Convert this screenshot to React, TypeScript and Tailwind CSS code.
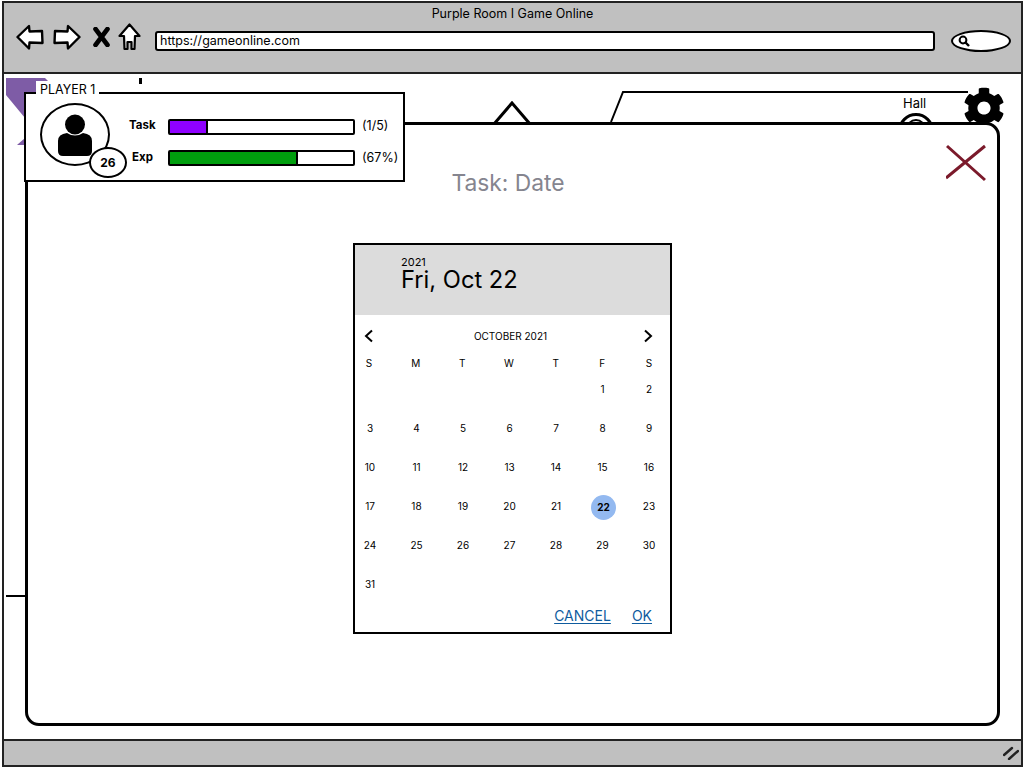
import { FaCog } from "react-icons/fa";

const WEEKDAYS = ["S", "M", "T", "W", "T", "F", "S"];
const LEADING_BLANKS = 5;
const DAYS = Array.from({ length: 31 }, (_, i) => i + 1);
const SELECTED_DAY = 22;

function BackArrow({ flip = false }: { flip?: boolean }) {
  return (
    <svg width="28" height="26" viewBox="0 0 28 26" className={flip ? "-scale-x-100" : ""}>
      <path
        d="M1.5 13 L13 2 L13.5 7.5 L26 7 L26.5 19 L13.5 18.5 L13 24.5 Z"
        fill="white"
        stroke="black"
        strokeWidth="2.4"
        strokeLinejoin="round"
      />
    </svg>
  );
}

function HomeIcon() {
  return (
    <svg width="23" height="28" viewBox="0 0 23 28">
      <path
        d="M11.5 1.5 L21.5 13 L17 13 L16.5 26 L13.5 26 L13.5 19 L9.5 19 L9.5 26 L6.5 26 L6 13 L1.5 13 Z"
        fill="white"
        stroke="black"
        strokeWidth="2.2"
        strokeLinejoin="round"
      />
    </svg>
  );
}

function StopIcon() {
  return (
    <svg width="17" height="20" viewBox="0 0 17 20">
      <path d="M2.5 2 L14.5 18 M14.5 2 L2.5 18" stroke="black" strokeWidth="4.6" strokeLinecap="round" />
    </svg>
  );
}

function PersonIcon() {
  return (
    <svg width="36" height="42" viewBox="0 0 36 42">
      <circle cx="18" cy="10.5" r="10" fill="black" />
      <path d="M1 27 Q1 20 10 19 Q18 24 26 19 Q35 20 35 27 L35 37 Q35 42 30 42 L6 42 Q1 42 1 37 Z" fill="black" />
    </svg>
  );
}

function Bar({ percent, color }: { percent: number; color: string }) {
  return (
    <div className="h-4 w-[187px] rounded-[2px] border-2 border-black bg-white">
      <div className="h-full border-r-2 border-black" style={{ width: `${percent}%`, backgroundColor: color }} />
    </div>
  );
}

function PlayerPanel() {
  return (
    <div className="absolute left-[20px] top-[18px] z-20 h-[90px] w-[381px] border-2 border-black bg-white">
      <span className="absolute -top-[13px] left-[10px] bg-white px-[4px] text-[12.5px] leading-[18px]">PLAYER 1</span>
      <div className="absolute left-[14px] top-[9px] flex h-[63px] w-[70px] items-center justify-center rounded-[50%] border-2 border-black">
        <PersonIcon />
      </div>
      <div className="absolute left-[63px] top-[53px] flex h-[31px] w-[38px] items-center justify-center rounded-[50%] border-2 border-black bg-white text-[12px] font-bold">
        26
      </div>
      <div className="ml-[103px] flex flex-col gap-[15px] pt-[25px]">
        <div className="flex h-4 items-center">
          <span className="w-[39px] pb-[2px] text-[11.5px] font-bold">Task</span>
          <Bar percent={21} color="#8f00ff" />
          <span className="ml-[7px] pb-[2px] text-[12.5px]">(1/5)</span>
        </div>
        <div className="flex h-4 items-center">
          <span className="w-[39px] pl-[3px] text-[11.5px] font-bold">Exp</span>
          <Bar percent={70} color="#009e0e" />
          <span className="ml-[7px] text-[12.5px]">(67%)</span>
        </div>
      </div>
    </div>
  );
}

function DatePicker() {
  return (
    <div className="ml-[325px] mt-[45px] flex h-[391px] w-[319px] flex-col border-2 border-black bg-white">
      <div className="h-[70px] bg-[#dcdcdc] pl-[46px] pt-[10px]">
        <div className="text-[11px] leading-[14px]">2021</div>
        <div className="text-[23.7px] leading-[22px]">Fri, Oct 22</div>
      </div>
      <div className="mt-[12px] flex h-[18px] items-center justify-between pl-[9px] pr-[17px]">
        <svg width="10" height="14" viewBox="0 0 10 14">
          <path d="M8 1.5 L2 7 L8 12.5" fill="none" stroke="black" strokeWidth="2" />
        </svg>
        <span className="ml-[4px] text-[10px]">OCTOBER 2021</span>
        <svg width="10" height="14" viewBox="0 0 10 14">
          <path d="M2 1.5 L8 7 L2 12.5" fill="none" stroke="black" strokeWidth="2" />
        </svg>
      </div>
      <div className="mt-[9px] grid grid-cols-[repeat(7,20px)] justify-between pl-[4px] pr-[11px] text-center text-[10px] leading-[18px]">
        {WEEKDAYS.map((d, i) => (
          <span key={i}>{d}</span>
        ))}
      </div>
      <div className="mt-[7px] grid auto-rows-[39px] grid-cols-[repeat(7,20px)] justify-between pl-[5px] pr-[11px] text-center text-[10px] leading-[20px]">
        {Array.from({ length: LEADING_BLANKS }, (_, i) => (
          <span key={`blank-${i}`} />
        ))}
        {DAYS.map((day) =>
          day === SELECTED_DAY ? (
            <span key={day} className="relative left-[1px] top-[1px] z-0 font-bold">
              <span className="absolute left-[-2.5px] top-[-2.5px] -z-10 size-[25px] rounded-full bg-[#93b9f0]" />
              {day}
            </span>
          ) : (
            <span key={day}>{day}</span>
          ),
        )}
      </div>
      <div className="mt-[-6px] flex justify-end gap-[21px] pr-[18px] text-[14px] leading-[18px] text-[#0f5c9e] underline underline-offset-2">
        <span>CANCEL</span>
        <span>OK</span>
      </div>
    </div>
  );
}

export default function App() {
  return (
    <div className="h-[768px] w-[1024px] overflow-hidden bg-white pb-[1px] pl-[2px] pr-[1px] pt-[1px] font-['Inter',sans-serif] text-black">
      <div className="flex h-full flex-col border-2 border-[#222]">
        {/* browser chrome */}
        <header className="h-[71px] shrink-0 border-b-2 border-[#222] bg-[#c0c0c0]">
          <div className="pt-[2px] text-center text-[12.5px] leading-[18px]">Purple Room I Game Online</div>
          <div className="flex h-[36px] items-center pl-[12px] pr-[10px]">
            <div className="mb-[8px] flex items-center">
              <BackArrow />
              <span className="w-[9px]" />
              <BackArrow flip />
              <span className="w-[12px]" />
              <StopIcon />
              <span className="w-[8px]" />
              <HomeIcon />
            </div>
            <div className="ml-[14px] flex h-[20px] w-[781px] items-center rounded-[3px] border-2 border-black bg-white pl-[3px] text-[12.5px]">
              https://gameonline.com
            </div>
            <div className="ml-[16px] flex h-[22px] w-[60px] items-center rounded-[50%] border-2 border-black bg-white pl-[5px]">
              <svg width="12" height="12" viewBox="0 0 12 12">
                <circle cx="5" cy="5" r="3.4" fill="none" stroke="black" strokeWidth="2" />
                <path d="M7.5 7.5 L11 11" stroke="black" strokeWidth="2.4" />
              </svg>
            </div>
          </div>
        </header>

        {/* page */}
        <main className="relative flex-1 bg-white">
          {/* room behind the dialog */}
          <svg width="60" height="70" viewBox="0 0 60 70" className="absolute left-[2px] top-[4px]">
            <path d="M0 0 L39 0 L44 5 L19 40 L0 17 Z" fill="#7e5ca6" />
            <path d="M11 67 L19 60 L19 67 Z" fill="#7e5ca6" />
          </svg>
          <div className="absolute left-[135px] top-[4px] h-[6px] w-[3px] bg-black" />
          <div className="absolute left-[2px] top-[521px] h-[2px] w-[20px] bg-black" />
          <svg width="360" height="34" viewBox="0 0 360 34" className="absolute left-[606px] top-[16px]">
            <path d="M1 32 L13 2 L358 2" fill="none" stroke="black" strokeWidth="2" />
          </svg>
          <svg width="40" height="24" viewBox="0 0 40 24" className="absolute left-[488px] top-[27px]">
            <path d="M2 23 L20 2 L38 23" fill="white" stroke="black" strokeWidth="3" />
          </svg>
          <span className="absolute left-[899px] top-[20px] text-[13px] leading-[18px]">Hall</span>
          <div className="absolute left-[894px] top-[39px] flex size-[36px] justify-center rounded-full border-[3px] border-black pt-[3px]">
            <div className="size-[20px] rounded-full border-2 border-black" />
          </div>
          <FaCog className="absolute left-[959px] top-[13px] size-[42px]" />

          <PlayerPanel />

          {/* task dialog */}
          <div className="absolute left-[21px] top-[48px] z-10 h-[604px] w-[975px] rounded-[14px] border-[3px] border-black bg-white">
            <svg width="40" height="38" viewBox="0 0 40 38" className="absolute right-[11px] top-[19px]">
              <path d="M1 2 L39 36 M39 2 L0 34" stroke="#7b1a2b" strokeWidth="3" />
            </svg>
            <h1 className="pr-[9px] pt-[43px] text-center text-[22.8px] font-normal leading-[30px] text-[#85858f]">Task: Date</h1>
            <DatePicker />
          </div>
        </main>

        {/* status bar */}
        <footer className="flex h-[26px] shrink-0 items-center justify-end border-t-2 border-[#222] bg-[#c0c0c0] pr-[2px]">
          <svg width="16" height="14" viewBox="0 0 16 14">
            <path d="M1 9 L9 2 M6 13 L15 5" stroke="#222" strokeWidth="2.4" strokeLinecap="round" />
          </svg>
        </footer>
      </div>
    </div>
  );
}
